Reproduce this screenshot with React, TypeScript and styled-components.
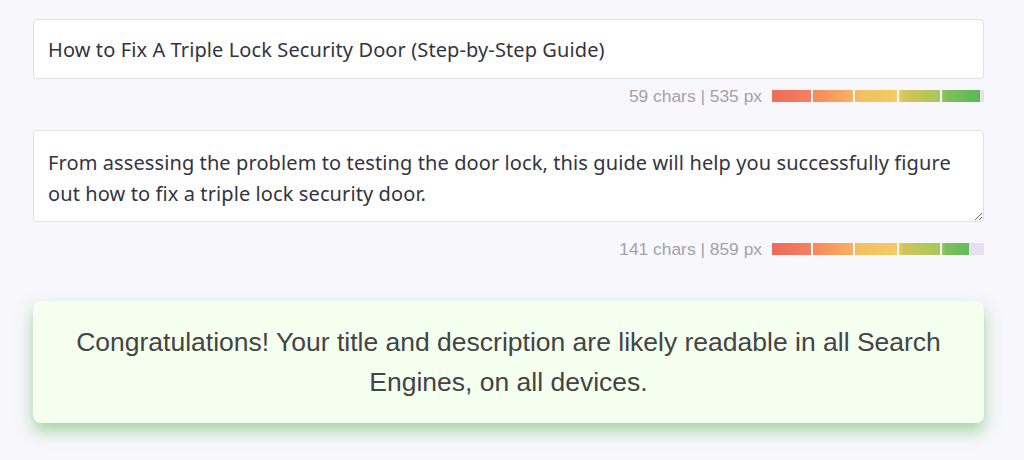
import React from 'react';
import styled, { createGlobalStyle } from 'styled-components';

const GlobalStyle = createGlobalStyle`
  html, body {
    margin: 0;
    padding: 0;
    background: #f8f7fc;
  }
`;

const TRACK_WIDTH = 212;

interface MeterProps {
  chars: number;
  pixels: number;
  fill: number;
}

const Meter: React.FC<MeterProps> = ({ chars, pixels, fill }) => (
  <MeterRow>
    <MeterLabel>{chars} chars | {pixels} px</MeterLabel>
    <Track>
      <Fill style={{ width: `${fill * 100}%` }} />
      {[39, 81, 125, 168].map((x) => (
        <Divider key={x} style={{ left: x }} />
      ))}
    </Track>
  </MeterRow>
);

const App: React.FC = () => {
  return (
    <Page>
      <GlobalStyle />
      <TitleInput
        type="text"
        defaultValue="How to Fix A Triple Lock Security Door (Step-by-Step Guide)"
      />
      <Meter chars={59} pixels={535} fill={208 / TRACK_WIDTH} />
      <DescArea
        defaultValue="From assessing the problem to testing the door lock, this guide will help you successfully figure out how to fix a triple lock security door."
      />
      <Meter chars={141} pixels={859} fill={197 / TRACK_WIDTH} />
      <Congrats>
        Congratulations! Your title and description are likely readable in all Search
        Engines, on all devices.
      </Congrats>
    </Page>
  );
};

const Page = styled.div`
  padding: 19px 40px 38px 33px;
`;

const TitleInput = styled.input`
  display: block;
  box-sizing: border-box;
  width: 100%;
  height: 60px;
  padding: 0 14px;
  border: 1px solid #e0dfe5;
  border-radius: 4px;
  background: #fff;
  font-family: 'Noto Sans', 'Open Sans', sans-serif;
  font-size: 20px;
  letter-spacing: 0.1px;
  color: #34343f;
  outline: none;
`;

const DescArea = styled.textarea`
  display: block;
  box-sizing: border-box;
  width: 100%;
  height: 92px;
  margin-top: 24px;
  padding: 16px 14px;
  border: 1px solid #e0dfe5;
  border-radius: 4px;
  background: #fff;
  font-family: 'Noto Sans', 'Open Sans', sans-serif;
  font-size: 20px;
  letter-spacing: 0.1px;
  line-height: 31px;
  color: #34343f;
  outline: none;
  resize: vertical;
  overflow: hidden;
`;

const MeterRow = styled.div`
  display: flex;
  justify-content: flex-end;
  align-items: center;
  gap: 10px;
  height: 20px;
  margin-top: 7px;

  textarea + & {
    margin-top: 17px;
  }
`;

const MeterLabel = styled.span`
  font-family: 'Liberation Sans', Arial, sans-serif;
  font-size: 17.4px;
  color: #a3a2a8;
`;

const Track = styled.div`
  position: relative;
  width: ${TRACK_WIDTH}px;
  height: 12px;
  background: #e6e0f0;
  overflow: hidden;
`;

const Fill = styled.div`
  height: 100%;
  background: linear-gradient(
    to right,
    #ef6a5b 0%,
    #f4805f 18%,
    #f68a5c 20%,
    #f8b164 38%,
    #f5c060 42%,
    #f2cc65 60%,
    #d2c55a 62%,
    #a5c75c 80%,
    #7cc05c 82%,
    #56b856 100%
  );
  background-size: ${TRACK_WIDTH}px 100%;
`;

const Divider = styled.div`
  position: absolute;
  top: 0;
  bottom: 0;
  width: 2px;
  background: #f8f7fc;
`;

const Congrats = styled.div`
  margin-top: 42px;
  padding: 21px 40px 21px;
  background: #f5fff0;
  border-radius: 8px;
  box-shadow: 0 8px 16px rgba(80, 180, 80, 0.5);
  text-align: center;
  font-family: 'Liberation Sans', Arial, sans-serif;
  font-size: 26.5px;
  line-height: 40px;
  color: #444;
`;

export default App;
